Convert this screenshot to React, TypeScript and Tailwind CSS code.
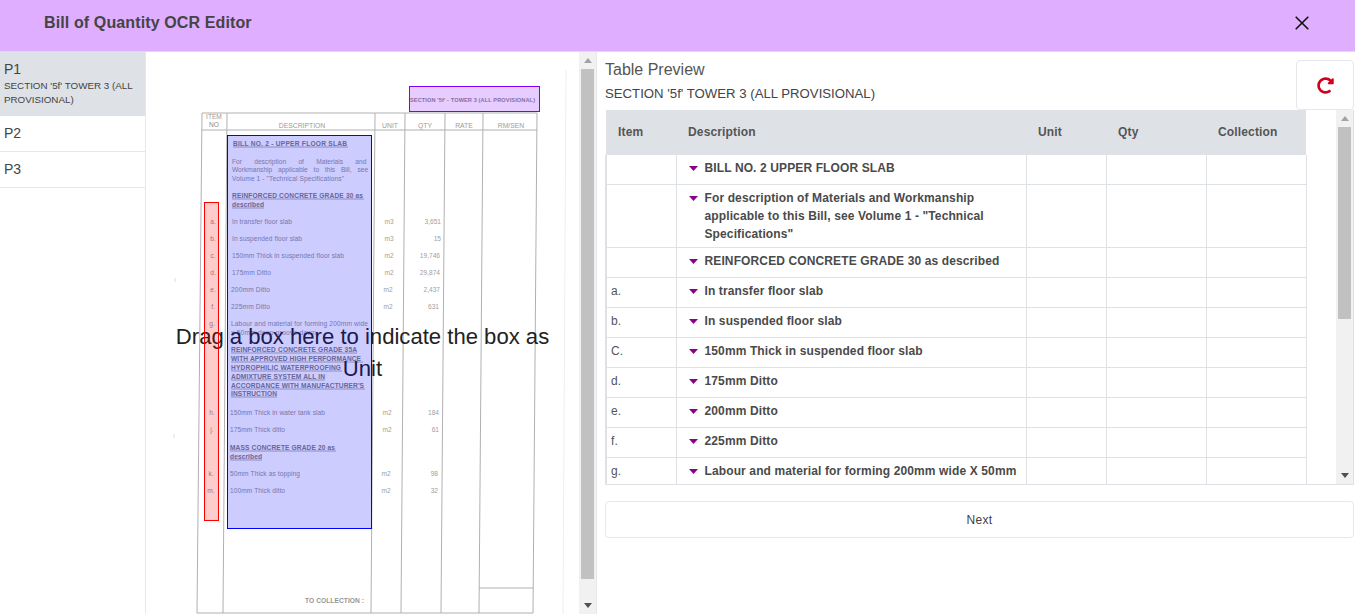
import { FaRedoAlt } from 'react-icons/fa';

const font = 'Liberation Sans, Arial, sans-serif';

const rules = [
  'M202 113 L537 113', 'M202 130 L537 130',
  'M202 113 L197 613', 'M227 113 L223 613', 'M375 113 L371 613', 'M405 113 L401 613',
  'M445 113 L441 613', 'M483 113 L479 613', 'M537 113 L533 613',
  'M197 613 L533 613', 'M479 588 L533 588',
];

// scanned page text: x, baseline, text, width, bold
const scanLines: [number, number, string, number, boolean?][] = [
  [233, 145, 'BILL NO. 2  -  UPPER FLOOR SLAB', 114, true],
  [232, 223, 'In transfer floor slab', 60],
  [232, 240, 'In suspended floor slab', 70],
  [232, 257, '150mm Thick in suspended floor slab', 112],
  [232, 274, '175mm Ditto', 39],
  [231, 291, '200mm Ditto', 39],
  [231, 308, '225mm Ditto', 39],
  [232, 180, 'Volume 1 - "Technical Specifications"', 112],
  [232, 197, 'REINFORCED CONCRETE GRADE 30 as', 131, true],
  [232, 206, 'described', 32, true],
  [231, 325, 'Labour and material for forming 200mm wide', 137],
  [231, 334, 'x 50mm deep groove down', 85],
  [231, 351, 'REINFORCED CONCRETE GRADE 35A', 126, true],
  [231, 360, 'WITH APPROVED HIGH PERFORMANCE', 130, true],
  [231, 369, 'HYDROPHILIC WATERPROOFING', 110, true],
  [231, 378, 'ADMIXTURE SYSTEM ALL IN', 94, true],
  [231, 387, "ACCORDANCE WITH MANUFACTURER'S", 133, true],
  [231, 395, 'INSTRUCTION', 46, true],
  [230, 414, '150mm Thick in water tank slab', 95],
  [230, 431, '175mm Thick ditto', 55],
  [230, 449, 'MASS CONCRETE GRADE 20 as', 105, true],
  [230, 458, 'described', 32, true],
  [230, 475, '50mm Thick as topping', 70],
  [230, 492, '100mm Thick ditto', 55],
];

const underlines = [
  'M233 147 L348 147', 'M232 199 L364 199', 'M232 208 L264 208', 'M231 353 L357 353', 'M231 362 L363 362',
  'M231 371 L342 371', 'M231 380 L325 380', 'M231 389 L365 389', 'M231 397 L277 397', 'M230 451 L336 451', 'M230 460 L262 460',
];

// item letter, x, baseline
const itemMarks: [string, number, number][] = [
  ['a.', 213, 223], ['b.', 213, 240], ['c.', 213, 257], ['d.', 213, 274], ['e.', 213, 291], ['f.', 213, 308], ['g.', 212, 325],
  ['h.', 212, 414], ['j.', 212, 431], ['k.', 211, 475], ['m.', 211, 492],
];

// unit x, qty right edge, baseline
const amounts: [string, string, number, number, number][] = [
  ['m3', '3,651', 389, 441, 223], ['m3', '15', 389, 441, 240], ['m2', '19,746', 389, 440, 257], ['m2', '29,874', 389, 440, 274],
  ['m2', '2,437', 388, 440, 291], ['m2', '631', 388, 439, 308], ['m2', '184', 387, 439, 414], ['m2', '61', 387, 439, 431],
  ['m2', '98', 386, 438, 475], ['m2', '32', 386, 438, 492],
];

function ScanPage() {
  return (
    <svg className="absolute left-0 top-0 opacity-[0.99]" width="434" height="562" viewBox="146 52 434 562" fontFamily={font}>
      <path d="M566 70 L563 614" stroke="#eeeeee" fill="none" />
      <path d="M175 278 L175 282 M174 434 L174 438" stroke="#dddddd" fill="none" />
      {rules.map((d) => (
        <path key={d} d={d} stroke="#b0b0b0" fill="none" />
      ))}
      {underlines.map((d) => (
        <path key={d} d={d} stroke="#8c8c8c" fill="none" strokeWidth="0.7" />
      ))}
      <text x="214" y="119" fontSize="6.6" fill="#9a9a9a" textAnchor="middle">ITEM</text>
      <text x="214" y="127" fontSize="6.6" fill="#8a8a8a" textAnchor="middle">NO</text>
      <text x="302" y="128" fontSize="6.8" fill="#9a9a9a" textAnchor="middle">DESCRIPTION</text>
      <text x="390" y="128" fontSize="6.8" fill="#9a9a9a" textAnchor="middle">UNIT</text>
      <text x="425" y="128" fontSize="6.8" fill="#9a9a9a" textAnchor="middle">QTY</text>
      <text x="464" y="128" fontSize="6.8" fill="#9a9a9a" textAnchor="middle">RATE</text>
      <text x="511" y="128" fontSize="6.8" fill="#9a9a9a" textAnchor="middle">RM/SEN</text>
      <text x="410" y="102" fontSize="5.6" fontWeight="700" fill="#8a8a8a" textLength="125">{"SECTION '5f' - TOWER 3 (ALL PROVISIONAL)"}</text>
      <g transform="translate(0 1)">
        <text x="232" y="163" fontSize="6.6" fill="#969696" wordSpacing="10.5">For description of Materials and</text>
        <text x="232" y="171" fontSize="6.6" fill="#969696" wordSpacing="4">Workmanship applicable to this Bill, see</text>
        {scanLines.map(([x, y, text, width, bold]) => (
          <text key={y} x={x} y={y} fontSize="6.6" fontWeight={bold ? 700 : 400} fill={bold ? '#808080' : '#969696'} textLength={width}>
            {text}
          </text>
        ))}
        {itemMarks.map(([text, x, y]) => (
          <text key={text} x={x} y={y} fontSize="6.6" fill="#8f8f8f" textAnchor="middle">{text}</text>
        ))}
        {amounts.map(([unit, qty, x, right, y]) => (
          <g key={y} fontSize="6.6" fill="#a0a0a0">
            <text x={x} y={y} textAnchor="middle">{unit}</text>
            <text x={right} y={y} textAnchor="end">{qty}</text>
          </g>
        ))}
      </g>
      <text x="305" y="603" fontSize="6.6" fontWeight="700" fill="#959595" textLength="59">TO COLLECTION :</text>
    </svg>
  );
}

function Arrow({ up, light }: { up?: boolean; light?: boolean }) {
  return (
    <div className="flex h-[17px] items-center justify-center">
      <svg width="8" height="5" viewBox="0 0 8 5">
        <path d={up ? 'M0 5 L4 0 L8 5 Z' : 'M0 0 L8 0 L4 5 Z'} fill={light ? '#a3a3a3' : '#505050'} />
      </svg>
    </div>
  );
}

const rows = [
  { item: '', text: 'BILL NO. 2 UPPER FLOOR SLAB', h: 'h-[29px]' },
  { item: '', text: 'For description of Materials and Workmanship applicable to this Bill, see Volume 1 - "Technical Specifications"', h: 'h-[63px]' },
  { item: '', text: 'REINFORCED CONCRETE GRADE 30 as described', h: 'h-[30px]' },
  { item: 'a.', text: 'In transfer floor slab', h: 'h-[30px]' },
  { item: 'b.', text: 'In suspended floor slab', h: 'h-[30px]' },
  { item: 'C.', text: '150mm Thick in suspended floor slab', h: 'h-[30px]' },
  { item: 'd.', text: '175mm Ditto', h: 'h-[30px]' },
  { item: 'e.', text: '200mm Ditto', h: 'h-[30px]' },
  { item: 'f.', text: '225mm Ditto', h: 'h-[30px]' },
  { item: 'g.', text: 'Labour and material for forming 200mm wide X 50mm', h: 'h-[27px]' },
];

export default function App() {
  return (
    <div className="flex h-[614px] w-[1355px] flex-col overflow-hidden bg-white text-[#444]" style={{ fontFamily: font }}>
      <header className="flex h-[52px] shrink-0 items-start justify-between border-b border-[#e3d6ee] bg-[#dfaeff] pl-11 pr-[46px]">
        <h1 className="mt-[14px] text-base font-bold leading-[18px] tracking-[0.12px] text-[#444]">Bill of Quantity OCR Editor</h1>
        <svg className="mt-[16px]" width="14" height="14" viewBox="0 0 14 14">
          <path d="M0.7 0.7 L13.3 13.3 M13.3 0.7 L0.7 13.3" stroke="#111" strokeWidth="1.6" fill="none" />
        </svg>
      </header>

      <div className="flex min-h-0 flex-1">
        <aside className="w-[146px] shrink-0 border-r border-[#e5e7eb]">
          <div className="h-[64px] bg-[#dee1e6] px-1 pt-[8px]">
            <div className="text-sm leading-[18px] text-[#444]">P1</div>
            <div className="mt-[1px] text-[9.8px] leading-[14px] text-[#444]">{"SECTION '5f' TOWER 3 (ALL PROVISIONAL)"}</div>
          </div>
          <div className="flex h-[36px] items-center border-b border-[#e5e7eb] px-1 pb-[2px] text-sm text-[#444]">P2</div>
          <div className="flex h-[36px] items-center border-b border-[#e5e7eb] px-1 pb-[2px] text-sm text-[#444]">P3</div>
        </aside>

        <section className="relative w-[433px] shrink-0 overflow-hidden">
          <ScanPage />
          <div className="absolute inset-x-0 top-[269px] flex justify-center">
            <p className="w-[392px] text-center text-[22.1px] leading-[32px] text-[#222]">Drag a box here to indicate the box as Unit</p>
          </div>
          <div className="absolute left-[263px] top-[34px] h-[26px] w-[131px] border border-[#8000ff] bg-[#8000ff]/20" />
          <div className="absolute left-[81px] top-[83px] h-[394px] w-[145px] border border-[#0000ff] bg-[#0000ff]/20" />
          <div className="absolute left-[58px] top-[150px] h-[319px] w-[15px] border border-[#ff0000] bg-[#ff0000]/20" />
        </section>

        <div className="flex w-[17px] shrink-0 flex-col bg-[#f1f1f1]">
          <Arrow up light />
          <div className="ml-[2px] h-[510px] w-[13px] bg-[#c1c1c1]" />
          <div className="flex-1" />
          <Arrow />
        </div>

        <main className="min-w-0 flex-1 border-l border-[#e5e7eb] pl-[8px] pr-[1px] pt-[8px]">
          <div className="flex h-[50px] items-start justify-between">
            <div>
              <h2 className="text-base leading-[19px] text-[#555]">Table Preview</h2>
              <p className="mt-[7px] text-[13.2px] leading-[16px] text-[#444]">{"SECTION '5f' TOWER 3 (ALL PROVISIONAL)"}</p>
            </div>
            <button className="flex h-[50px] w-[58px] items-center justify-center rounded border border-[#e5e7eb] bg-white">
              <FaRedoAlt className="text-[#d0021b]" size={17} />
            </button>
          </div>

          <div className="flex h-[375px] overflow-hidden border-b border-r border-[#dee1e6]">
            <div className="w-[701px] shrink-0">
              <table className="w-[700px] table-fixed border-collapse">
                <colgroup>
                  <col className="w-[70px]" />
                  <col className="w-[350px]" />
                  <col className="w-[80px]" />
                  <col className="w-[100px]" />
                  <col className="w-[100px]" />
                </colgroup>
                <thead>
                  <tr className="h-[45px] bg-[#dee1e6] text-left text-xs tracking-[0.15px] text-[#555]">
                    <th className="pb-[2px] pl-[12px] font-bold">Item</th>
                    <th className="pb-[2px] pl-[12px] font-bold">Description</th>
                    <th className="pb-[2px] pl-[12px] font-bold">Unit</th>
                    <th className="pb-[2px] pl-[12px] font-bold">Qty</th>
                    <th className="pb-[2px] pl-[12px] font-bold">Collection</th>
                  </tr>
                </thead>
                <tbody>
                  {rows.map((row) => (
                    <tr key={row.text} className={row.h}>
                      <td className="border-b border-r border-l-2 border-[#dee1e6] pl-[4px] pt-[4px] align-top text-xs leading-[18px] tracking-[0.15px] text-[#555]">{row.item}</td>
                      <td className="border-b border-r border-[#dee1e6] py-[4px] pl-[12px] pr-[6px] align-top">
                        <div className="flex items-start">
                          <svg className="mr-[7px] mt-[7px] shrink-0" width="9" height="5" viewBox="0 0 9 5">
                            <path d="M0 0 L9 0 L4.5 5 Z" fill="#8b008b" />
                          </svg>
                          <span className="text-xs font-bold leading-[18px] tracking-[0.12px] text-[#4a4a4a]">{row.text}</span>
                        </div>
                      </td>
                      <td className="border-b border-r border-[#dee1e6]" />
                      <td className="border-b border-r border-[#dee1e6]" />
                      <td className="border-b border-r border-[#dee1e6]" />
                    </tr>
                  ))}
                </tbody>
              </table>
            </div>
            <div className="flex-1" />
            <div className="flex w-[17px] shrink-0 flex-col bg-[#f1f1f1]">
              <Arrow up light />
              <div className="ml-[2px] h-[192px] w-[13px] bg-[#c1c1c1]" />
              <div className="flex-1" />
              <Arrow />
            </div>
          </div>

          <button className="mt-[16px] h-[37px] w-[749px] rounded border border-[#e5e7eb] bg-white text-xs tracking-[0.3px] text-[#444]">Next</button>
        </main>
      </div>
    </div>
  );
}
